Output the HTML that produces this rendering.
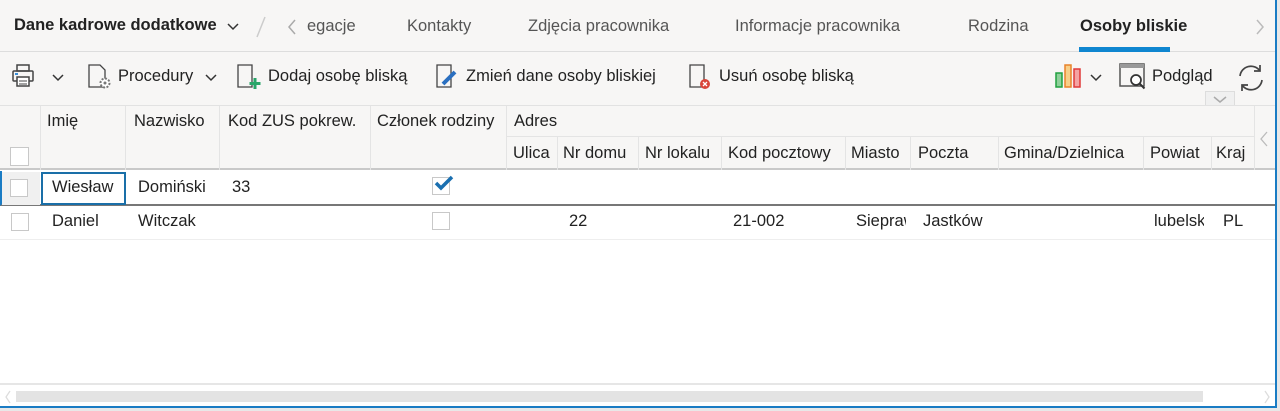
<!DOCTYPE html>
<html><head><meta charset="utf-8"><style>
*{box-sizing:border-box;margin:0;padding:0}
body{width:1280px;height:411px;overflow:hidden;background:#e8e8e8;font-family:"Liberation Sans",sans-serif;font-size:16.5px;color:#222;position:relative}
.win{position:absolute;left:0;top:0;width:1277px;height:408px;background:#fff;border-right:2px solid #1a7cc4;border-bottom:2px solid #1a7cc4}
.top{position:absolute;left:0;top:0;width:1275px;height:52px;background:#f7f6f5;border-bottom:1px solid #ddd}
.tb{position:absolute;left:0;top:52px;width:1275px;height:54px;background:#f7f6f5;border-bottom:1px solid #e2e2e2}
.hd{position:absolute;left:0;top:106px;width:1275px;height:64px;background:#f7f6f5;border-bottom:2px solid #c9c9c9}
.t{position:absolute;white-space:nowrap}
.tab{color:#555;top:17px}
.vl{position:absolute;width:1px;background:#e4e4e4}
.cb{position:absolute;width:18px;height:18px;border:1px solid #c8c8c8;background:#fff}
</style></head><body>
<div class="win">
<div class="top">
 <div class="t" style="left:14px;top:16px;font-weight:bold;color:#222">Dane kadrowe dodatkowe</div>
 <svg class="t" style="left:226px;top:21px" width="14" height="10"><path d="M2 3l5 5 5-5" stroke="#333" stroke-width="1.5" fill="none"/></svg>
 <svg class="t" style="left:255px;top:15px" width="12" height="24"><path d="M10 2L2 22" stroke="#ccc" stroke-width="1.5"/></svg>
 <svg class="t" style="left:286px;top:18px" width="12" height="18"><path d="M9 2L3 9l6 7" stroke="#aaa" stroke-width="1.5" fill="none"/></svg>
 <div class="t tab" style="left:307px">egacje</div>
 <div class="t tab" style="left:407px">Kontakty</div>
 <div class="t tab" style="left:528px">Zdjęcia pracownika</div>
 <div class="t tab" style="left:735px">Informacje pracownika</div>
 <div class="t tab" style="left:968px">Rodzina</div>
 <div class="t" style="left:1080px;top:17px;font-weight:bold;color:#222">Osoby bliskie</div>
 <div class="t" style="left:1079px;top:47px;width:91px;height:5px;background:#0f86d0"></div>
 <svg class="t" style="left:1254px;top:18px" width="12" height="18"><path d="M3 2l6 7-6 7" stroke="#bbb" stroke-width="1.5" fill="none"/></svg>
</div>
<div class="tb">
 <svg class="t" style="left:12px;top:11px" width="22" height="26"><rect x="5" y="2" width="12" height="6" fill="none" stroke="#444" stroke-width="1.5"/><rect x="1" y="8" width="20" height="10" rx="1" fill="none" stroke="#444" stroke-width="1.5"/><rect x="5" y="14" width="12" height="9" fill="#fff" stroke="#444" stroke-width="1.5"/><rect x="3" y="10" width="3" height="2" fill="#3a8fd8"/><path d="M7 18h8M7 21h8" stroke="#444"/></svg>
 <svg class="t" style="left:52px;top:22px" width="12" height="8"><path d="M1 1l5 5 5-5" stroke="#333" stroke-width="1.5" fill="none"/></svg>
 <svg class="t" style="left:88px;top:12px" width="26" height="26"><path d="M1 1h11l5 5v17H1z" fill="none" stroke="#444" stroke-width="1.3"/><circle cx="17" cy="19" r="4.5" fill="#fff" stroke="#777" stroke-width="2" stroke-dasharray="2 1.5"/><circle cx="17" cy="19" r="1.5" fill="#777"/></svg>
 <div class="t" style="left:118px;top:15px">Procedury</div>
 <svg class="t" style="left:205px;top:22px" width="12" height="8"><path d="M1 1l5 5 5-5" stroke="#333" stroke-width="1.5" fill="none"/></svg>
 <svg class="t" style="left:237px;top:12px" width="26" height="26"><path d="M1 1h14v22H1z" fill="none" stroke="#444" stroke-width="1.3"/><path d="M18 14v11M12.5 19.5h11" stroke="#2aa66a" stroke-width="3"/></svg>
 <div class="t" style="left:268px;top:15px">Dodaj osobę bliską</div>
 <svg class="t" style="left:436px;top:12px" width="26" height="26"><path d="M1 1h14v22H1z" fill="none" stroke="#444" stroke-width="1.3"/><path d="M7 20L19 8" stroke="#2a6fc0" stroke-width="4"/></svg>
 <div class="t" style="left:466px;top:15px">Zmień dane osoby bliskiej</div>
 <svg class="t" style="left:689px;top:12px" width="26" height="26"><path d="M1 1h14v22H1z" fill="none" stroke="#444" stroke-width="1.3"/><circle cx="16" cy="20" r="5" fill="#d9463a"/><path d="M14 18l4 4M18 18l-4 4" stroke="#fff" stroke-width="1.3"/></svg>
 <div class="t" style="left:719px;top:15px">Usuń osobę bliską</div>
 <svg class="t" style="left:1055px;top:11px" width="30" height="26"><rect x="1" y="10" width="6" height="14" fill="#8fd09a" stroke="#20a040" stroke-width="1.5"/><rect x="10" y="2" width="6" height="22" fill="#f8cf88" stroke="#e8822a" stroke-width="1.5"/><rect x="19" y="6" width="6" height="18" fill="#f4a3a3" stroke="#e03a3a" stroke-width="1.5"/></svg>
 <svg class="t" style="left:1090px;top:22px" width="12" height="8"><path d="M1 1l5 5 5-5" stroke="#333" stroke-width="1.5" fill="none"/></svg>
 <svg class="t" style="left:1119px;top:11px" width="28" height="28"><rect x="1" y="1" width="24" height="22" fill="none" stroke="#555" stroke-width="1.5"/><rect x="1" y="1" width="24" height="4" fill="#999"/><circle cx="17" cy="17" r="5" fill="#fff" stroke="#333" stroke-width="1.7"/><path d="M20.5 20.5l5 5" stroke="#333" stroke-width="2"/></svg>
 <div class="t" style="left:1152px;top:15px">Podgląd</div>
 <svg class="t" style="left:1236px;top:11px" width="30" height="30"><path d="M4 13A11 11 0 0 1 24 8M26 17A11 11 0 0 1 6 22" fill="none" stroke="#444" stroke-width="1.7"/><path d="M24 2v6h-6M6 28v-6h6" fill="none" stroke="#444" stroke-width="1.7"/></svg>
 <div class="t" style="left:1205px;top:39px;width:30px;height:14px;border:1px solid #ddd;border-bottom:none;background:#f0f0f0"><svg width="28" height="12"><path d="M8 3l6 5 6-5" stroke="#aaa" stroke-width="1.5" fill="none"/></svg></div>
</div>
<div class="hd">
 <div class="cb" style="left:10px;top:41px;width:19px;height:19px"></div>
 <div class="vl" style="left:40px;top:0;height:64px"></div>
 <div class="vl" style="left:125px;top:0;height:64px"></div>
 <div class="vl" style="left:219px;top:0;height:64px"></div>
 <div class="vl" style="left:370px;top:0;height:64px"></div>
 <div class="vl" style="left:506px;top:0;height:64px"></div>
 <div class="vl" style="left:506px;top:30px;width:748px;height:1px"></div>
 <div class="vl" style="left:557px;top:30px;height:34px"></div>
 <div class="vl" style="left:638px;top:30px;height:34px"></div>
 <div class="vl" style="left:721px;top:30px;height:34px"></div>
 <div class="vl" style="left:845px;top:30px;height:34px"></div>
 <div class="vl" style="left:910px;top:30px;height:34px"></div>
 <div class="vl" style="left:998px;top:30px;height:34px"></div>
 <div class="vl" style="left:1143px;top:30px;height:34px"></div>
 <div class="vl" style="left:1211px;top:30px;height:34px"></div>
 <div class="vl" style="left:1254px;top:0;height:64px"></div>
 <div class="t" style="left:47px;top:6px">Imię</div>
 <div class="t" style="left:134px;top:6px">Nazwisko</div>
 <div class="t" style="left:228px;top:6px">Kod ZUS pokrew.</div>
 <div class="t" style="left:377px;top:6px">Członek rodziny</div>
 <div class="t" style="left:514px;top:6px">Adres</div>
 <div class="t" style="left:513px;top:38px">Ulica</div>
 <div class="t" style="left:563px;top:38px">Nr domu</div>
 <div class="t" style="left:645px;top:38px">Nr lokalu</div>
 <div class="t" style="left:728px;top:38px">Kod pocztowy</div>
 <div class="t" style="left:851px;top:38px">Miasto</div>
 <div class="t" style="left:918px;top:38px">Poczta</div>
 <div class="t" style="left:1004px;top:38px">Gmina/Dzielnica</div>
 <div class="t" style="left:1150px;top:38px">Powiat</div>
 <div class="t" style="left:1216px;top:38px">Kraj</div>
 <svg class="t" style="left:1258px;top:24px" width="12" height="18"><path d="M9 2L3 9l6 7" stroke="#bbb" stroke-width="1.3" fill="none"/></svg>
</div>
<div class="t" style="left:0;top:171px;width:1275px;height:35px;border-bottom:2px solid #777;border-left:2px solid #1a7cc4"></div>
<div class="t" style="left:2px;top:172px;width:38px;height:33px;background:#f0f0f0"></div>
<div class="cb" style="left:10px;top:179px"></div>
<div class="t" style="left:41px;top:172px;width:85px;height:33px;border:2px solid #1a6fa8"></div>
<div class="t" style="left:52px;top:178px">Wiesław</div>
<div class="t" style="left:138px;top:178px">Domiński</div>
<div class="t" style="left:232px;top:178px">33</div>
<div class="cb" style="left:432px;top:177px"></div>
<svg class="t" style="left:434px;top:175px" width="20" height="16"><path d="M2 8l5 5L18 2" stroke="#1a6fb0" stroke-width="3.5" fill="none"/></svg>
<div class="cb" style="left:11px;top:213px"></div>
<div class="t" style="left:52px;top:212px">Daniel</div>
<div class="t" style="left:138px;top:212px">Witczak</div>
<div class="cb" style="left:432px;top:212px"></div>
<div class="t" style="left:569px;top:212px">22</div>
<div class="t" style="left:733px;top:212px">21-002</div>
<div class="t" style="left:856px;top:212px;width:50px;overflow:hidden">Sieprawice</div>
<div class="t" style="left:923px;top:212px">Jastków</div>
<div class="t" style="left:1154px;top:212px;width:50px;overflow:hidden">lubelski</div>
<div class="t" style="left:1223px;top:212px">PL</div>
<div class="t" style="left:0;top:239px;width:1275px;height:1px;background:#eee"></div>
<div class="t" style="left:0;top:383px;width:1275px;height:2px;background:#e6e6e6"></div>
<div class="t" style="left:16px;top:391px;width:1187px;height:11px;background:#e3e3e3"></div>
<svg class="t" style="left:4px;top:390px" width="8" height="14"><path d="M6 1L2 7l4 6" stroke="#ddd" stroke-width="1.3" fill="none"/></svg>
<svg class="t" style="left:1263px;top:390px" width="8" height="14"><path d="M2 1l4 6-4 6" stroke="#ddd" stroke-width="1.3" fill="none"/></svg>
</div>
</body></html>
